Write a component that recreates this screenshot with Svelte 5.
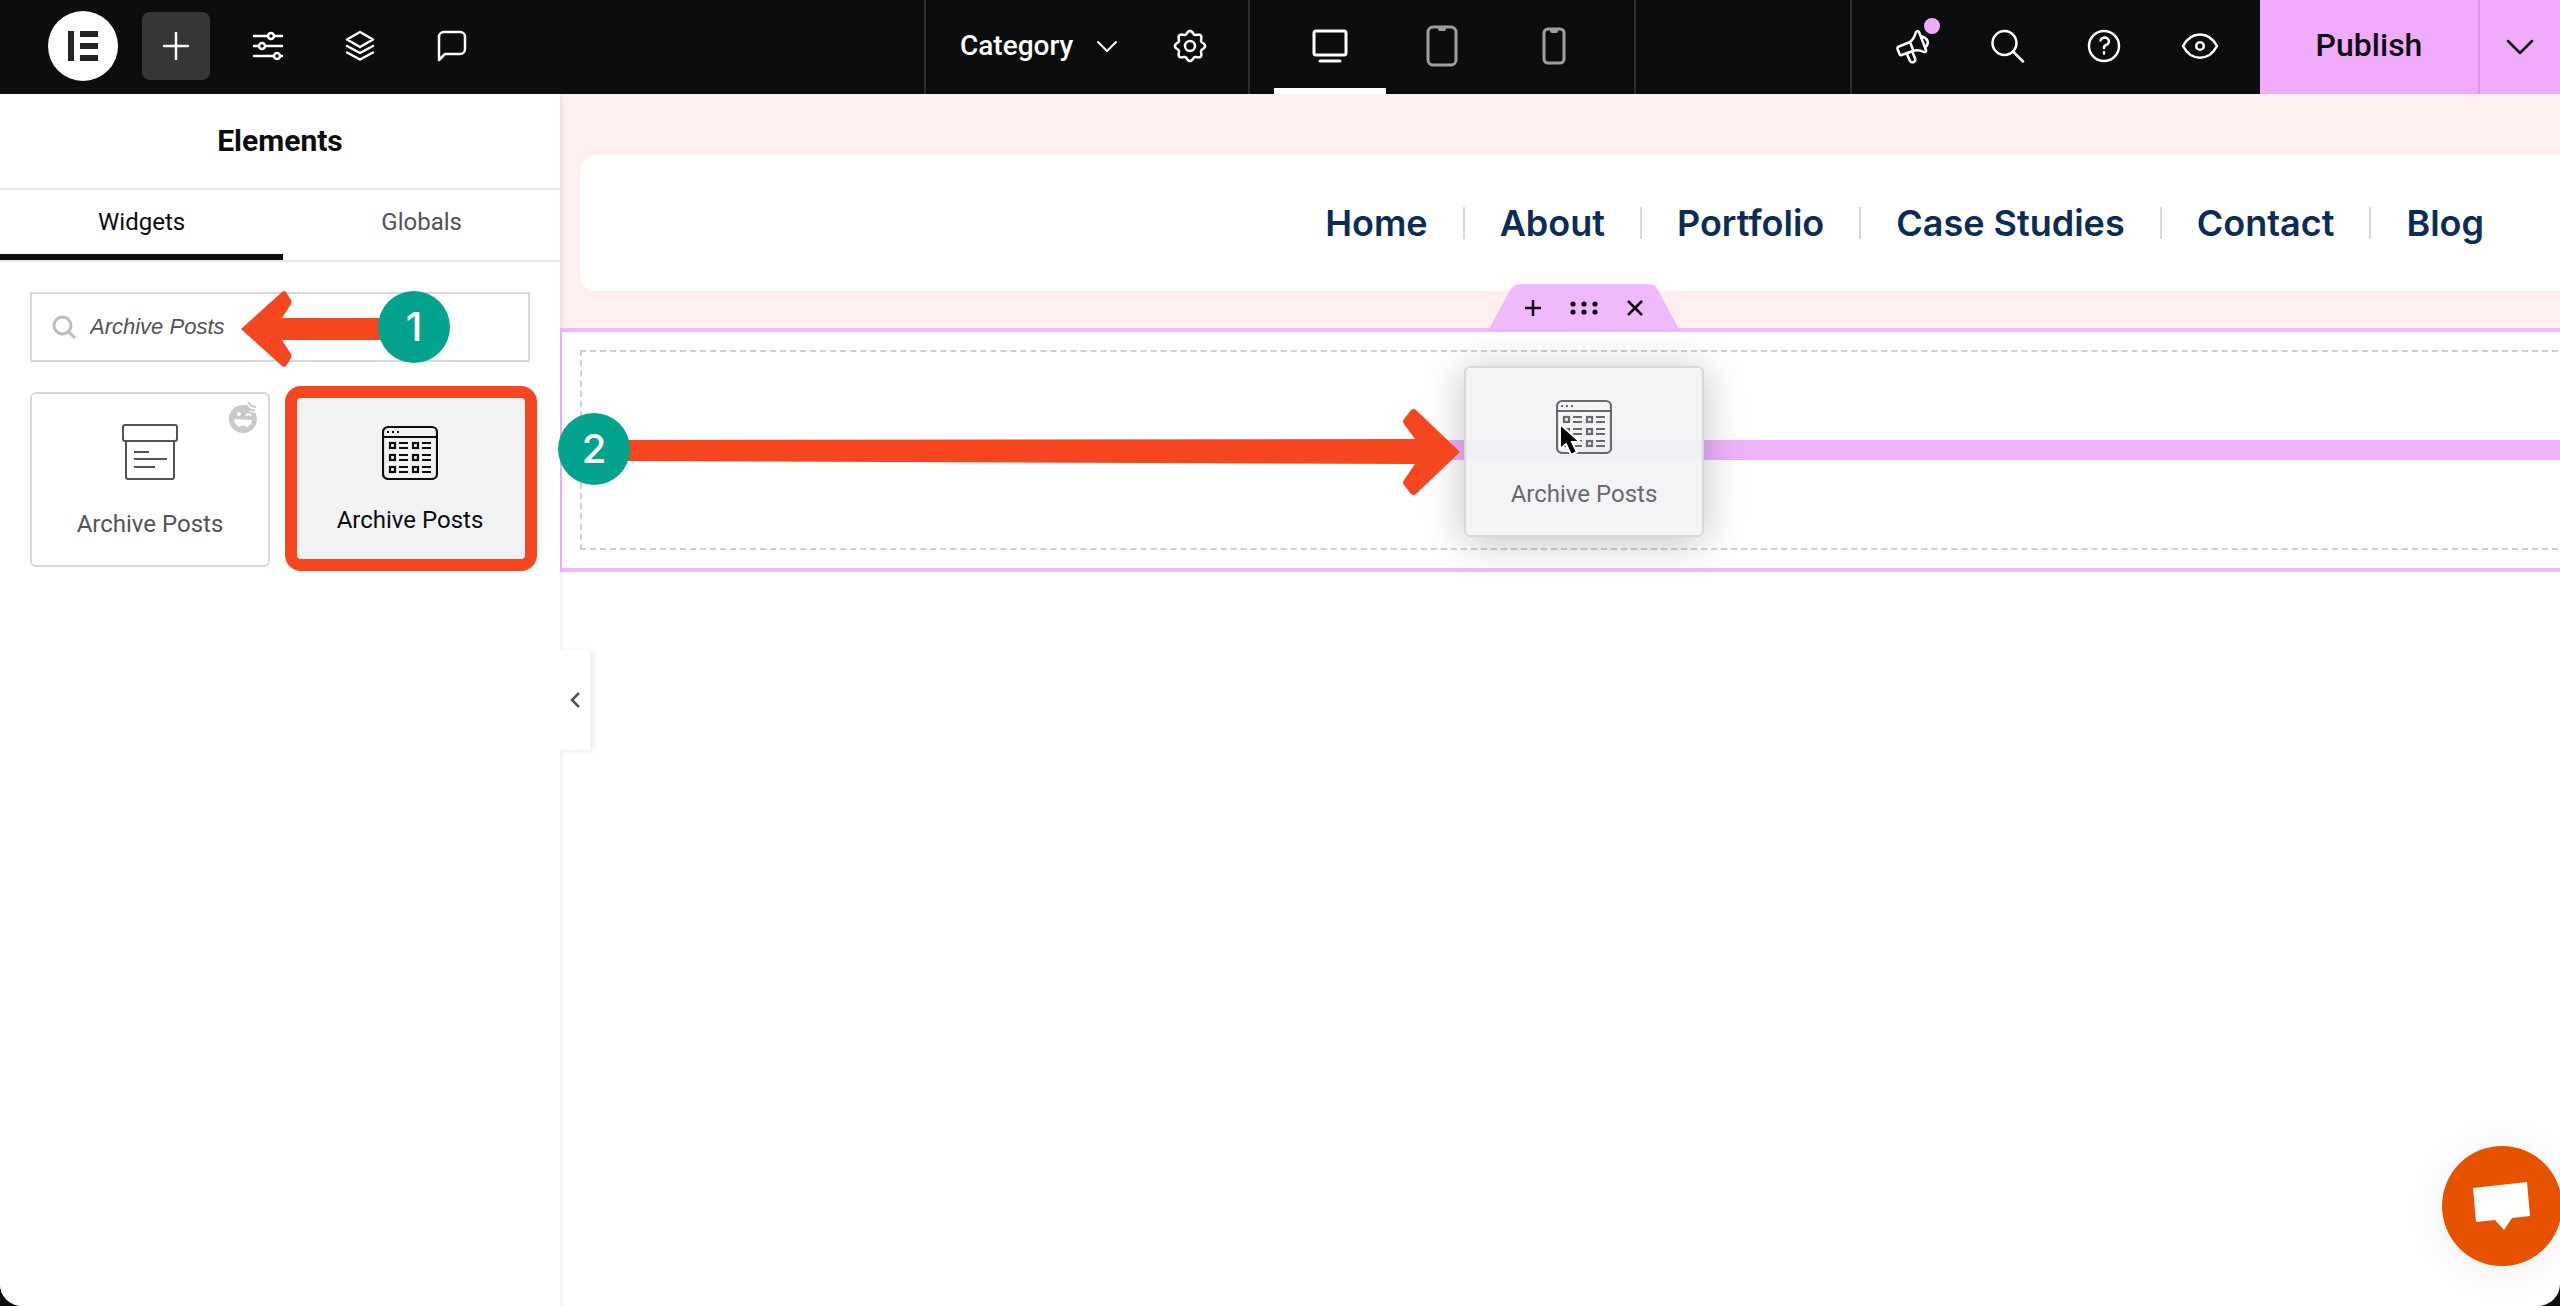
<script lang="ts">
	let query = $state('Archive Posts');
	let activeTab = $state('widgets');
	let device = $state('desktop');

	const navItems = ['Home', 'About', 'Portfolio', 'Case Studies', 'Contact', 'Blog'];

	// eight-toothed outline for the settings cog
	function cogPath(cx: number, cy: number, r: number, depth: number) {
		const pts: string[] = [];
		for (let i = 0; i < 160; i++) {
			const a = (i / 160) * Math.PI * 2;
			const d = r + depth * Math.cos(8 * a);
			pts.push(`${(cx + d * Math.cos(a)).toFixed(2)} ${(cy + d * Math.sin(a)).toFixed(2)}`);
		}
		return 'M' + pts.join('L') + 'Z';
	}
</script>

{#snippet postsIcon()}
	<svg class="widget-icon" width="56" height="56" viewBox="0 -2 56 56" fill="none" stroke="currentColor" stroke-width="2.2">
		<rect x="1" y="1" width="54" height="52" rx="5" />
		<path d="M1 11h54" />
		<path d="M5 6h2M10 6h2M15 6h2" />
		{#each [17, 29, 41] as y}
			{#each [8, 31] as x}
				<rect {x} {y} width="5" height="5" />
				<path d="M{x + 9} {y}h9M{x + 9} {y + 5}h9" />
			{/each}
		{/each}
	</svg>
{/snippet}

<div class="editor">
	<header class="topbar">
		<div class="bar-left">
			<a class="logo" href="#top" aria-label="Elementor">
				<svg width="30" height="30" viewBox="0 0 30 30" fill="#222426">
					<path d="M0 0h6v30H0zM12 0h18v6H12zM12 12h18v6H12zM12 24h18v6H12z" />
				</svg>
			</a>
			<button class="tool active" aria-label="Add element">
				<svg width="28" height="28" viewBox="0 0 28 28"><path d="M14 1v26M2 14h24" /></svg>
			</button>
			<button class="tool" aria-label="Site settings">
				<svg width="32" height="32" viewBox="0 0 32 32">
					<path d="M2 6h13M23 6h7M2 16h4M14 16h16M2 26h19M29 26h1" />
					<circle cx="19" cy="6" r="3" /><circle cx="10" cy="16" r="3" /><circle cx="25" cy="26" r="3" />
				</svg>
			</button>
			<button class="tool" aria-label="Structure">
				<svg width="32" height="32" viewBox="0 0 32 32">
					<path d="M16 2l13 7.500-13 7.500L3 9.500zM3 16l13 7 13-7M3 22.500l13 7 13-7" />
				</svg>
			</button>
			<button class="tool" aria-label="Notes">
				<svg width="32" height="32" viewBox="0 0 32 32">
					<path d="M3 30V7a5 5 0 0 1 5-5h16a5 5 0 0 1 5 5v12a5 5 0 0 1-5 5H9z" />
				</svg>
			</button>
		</div>

		<div class="bar-center">
			<div class="document">
				<button class="doc-name">
					Category
					<svg width="20" height="14" viewBox="0 0 20 14"><path d="M1 3l9 9 9-9" stroke-width="2" /></svg>
				</button>
				<button class="cog" aria-label="Page settings">
					<svg width="36" height="36" viewBox="0 0 36 36">
						<path d={cogPath(18, 18, 13.6, 1.5)} /><circle cx="18" cy="18" r="5" />
					</svg>
				</button>
			</div>
			<div class="devices">
				<button class:on={device === 'desktop'} onclick={() => (device = 'desktop')} aria-label="Desktop">
					<svg width="36" height="36" viewBox="0 0 36 36">
						<rect x="2" y="3" width="32" height="24" rx="2" /><path d="M8 33h20" />
					</svg>
				</button>
				<button class:on={device === 'tablet'} onclick={() => (device = 'tablet')} aria-label="Tablet">
					<svg width="32" height="42" viewBox="0 0 32 42">
						<rect x="2" y="2" width="28" height="38" rx="5" /><path d="M14 4h4" stroke-width="4" />
					</svg>
				</button>
				<button class:on={device === 'mobile'} onclick={() => (device = 'mobile')} aria-label="Mobile">
					<svg width="24" height="38" viewBox="0 0 24 38">
						<rect x="2" y="2" width="20" height="34" rx="4" /><path d="M10 4h4" stroke-width="4" />
					</svg>
				</button>
			</div>
		</div>

		<div class="bar-right">
			<div class="utilities">
				<button class="tool" aria-label="What's new">
					<svg width="34" height="36" viewBox="0 0 34 36">
						<path d="M4 18.500L15 14q4-3 6-10 1.500-2 3 0l7 18q.5 2-2 2-6-3-11-1L6.500 27q-1.500.5-2-1L2.500 21q-.5-2 1.500-2.500zM15 14l3.500 9M12 26l3 7q1.500 2 4 1 2-1.500 1-3.500L17.500 24M27 8.500q4.500 1.500 5.500 4.500t-1.500 5.500" />
					</svg>
					<span class="dot"></span>
				</button>
				<button class="tool" aria-label="Finder">
					<svg width="34" height="34" viewBox="0 0 34 34"><circle cx="13.500" cy="14" r="12" /><path d="M22 22.500L32 32.500" /></svg>
				</button>
				<button class="tool" aria-label="Help">
					<svg width="34" height="34" viewBox="0 0 34 34">
						<circle cx="17" cy="17" r="15" />
						<path d="M13.500 11.500a4.300 3.800 0 1 1 5.500 4.500c-1.500.6-2 1.300-2 3M17 23.200v1.200" />
					</svg>
				</button>
				<button class="tool" aria-label="Preview">
					<svg width="38" height="28" viewBox="0 0 38 28">
						<path d="M2 14C10-1.500 28-1.500 36 14 28 29.500 10 29.500 2 14z" /><circle cx="19" cy="14" r="3.800" />
					</svg>
				</button>
			</div>
			<button class="publish">Publish</button>
			<button class="publish-more" aria-label="Save options">
				<svg width="28" height="18" viewBox="0 0 28 18"><path d="M2 3l12 12L26 3" /></svg>
			</button>
		</div>
	</header>

	<div class="workspace">
		<aside class="panel">
			<h1>Elements</h1>
			<div class="tabs" role="tablist">
				<button role="tab" aria-selected={activeTab === 'widgets'} class:on={activeTab === 'widgets'} onclick={() => (activeTab = 'widgets')}>Widgets</button>
				<button role="tab" aria-selected={activeTab === 'globals'} class:on={activeTab === 'globals'} onclick={() => (activeTab = 'globals')}>Globals</button>
			</div>

			<div class="search">
				<svg width="24" height="24" viewBox="0 0 24 24" fill="none" stroke="#babcbf" stroke-width="3">
					<circle cx="10.500" cy="10.500" r="8.500" /><path d="M17 17l6 6" />
				</svg>
				<input type="text" bind:value={query} aria-label="Search widget" />
				<!-- step 1 -->
				<svg class="arrow-one" width="148" height="78" viewBox="0 0 148 78" fill="#f6461f">
					<path d="M1 39L42 2q2-2 4 0l5 8q1 2 0 4L42 28h106v22H42l9 14q1 2 0 4l-5 8q-2 2-4 0z" />
				</svg>
				<span class="step step-one">1</span>
			</div>

			<div class="widgets">
				<button class="card">
					<svg class="widget-icon" width="56" height="60" viewBox="0 0 56 60" fill="none" stroke="currentColor" stroke-width="2">
						<rect x="1" y="1" width="54" height="16" rx="2" />
						<path d="M4 17v36a2 2 0 0 0 2 2h44a2 2 0 0 0 2-2V17M12 28h15M12 35h33M12 43h21" />
					</svg>
					<span>Archive Posts</span>
					<svg class="brand" width="30" height="32" viewBox="0 0 30 32" fill="none">
						<circle cx="15" cy="17" r="14" fill="#c6c8ca" />
						<path d="M17 0h13v11l-8-1z" fill="#fff" />
						<path d="M18 3c2 4 5 6 9 5M20 0c2 3 4 5 8 5" stroke="#c6c8ca" stroke-width="2" />
						<circle cx="11" cy="12" r="2" fill="#fff" />
						<path d="M18 14c2-3 4-2 5 0" stroke="#fff" stroke-width="2" />
						<path d="M6 17l18 1c0 10-17 11-18-1z" fill="#fff" />
						<path d="M11 25q4-3 8 0-4 3-8 0z" fill="#c6c8ca" />
					</svg>
				</button>
				<button class="card picked">
					{@render postsIcon()}
					<span>Archive Posts</span>
				</button>
			</div>

			<button class="collapse" aria-label="Hide panel">
				<svg width="12" height="16" viewBox="0 0 12 16"><path d="M10 1L3 8l7 7" /></svg>
			</button>
		</aside>

		<main class="canvas">
			<div class="site-header">
				<nav>
					{#each navItems as item, i}
						{#if i > 0}<span class="divider"></span>{/if}
						<a href="#{item}">{item}</a>
					{/each}
				</nav>
			</div>

			<section class="section">
				<div class="section-handle">
					<svg class="handle-shape" width="190" height="48" viewBox="0 0 190 48" fill="#f0b9fb">
						<path d="M0 45L21 6q4-6 10-6h129q6 0 9 6l21 39v3H0z" />
					</svg>
					<button aria-label="Add section">
						<svg width="18" height="18" viewBox="0 0 18 18"><path d="M9 1v16M1 9h16" /></svg>
					</button>
					<button aria-label="Edit section">
						<svg class="grip" width="28" height="14" viewBox="0 0 28 14">
							{#each [3, 14, 25] as x}
								<circle cx={x} cy="3" r="2.600" /><circle cx={x} cy="11" r="2.600" />
							{/each}
						</svg>
					</button>
					<button aria-label="Delete section">
						<svg width="18" height="18" viewBox="0 0 18 18"><path d="M2 2l14 14M16 2L2 16" /></svg>
					</button>
				</div>
				<div class="column">
					<div class="drop-line"></div>
				</div>
				<div class="card dragged">
					{@render postsIcon()}
					<span>Archive Posts</span>
					<svg class="cursor" width="28" height="38" viewBox="0 0 28 38">
						<path d="M4 2v25l6-5 5 11 6-3-5-10h8z" fill="#000" stroke="#fff" stroke-width="2" />
					</svg>
				</div>
				<!-- step 2 -->
				<svg class="arrow-two" width="836" height="88" viewBox="0 0 836 88" fill="#f6461f">
					<path d="M0 32L791 31 780 16q-2-3 0-5l7-9q3-2 5 0l44 42-44 42q-2 2-5 0l-7-9q-2-2 0-5l11-16L0 53z" />
				</svg>
				<span class="step step-two">2</span>
			</section>
		</main>
	</div>

	<button class="chat" aria-label="Open chat">
		<svg width="58" height="50" viewBox="0 0 58 50" fill="#fff"><path d="M0 7L54 1l3 34-18 2-8 12-9-10-19 2z" /></svg>
	</button>
</div>

<style>
	:global(body) {
		margin: 0;
		background: #0c0d0e;
	}

	.editor {
		display: flex;
		flex-direction: column;
		min-height: 100vh;
		background: #fff;
		border-radius: 0 0 22px 22px;
		overflow: hidden;
		font-family: Roboto, "Liberation Sans", sans-serif;
	}

	button {
		font: inherit;
		color: inherit;
		background: none;
		border: 0;
		padding: 0;
		cursor: pointer;
	}

	a { text-decoration: none; }

	svg { flex: none; display: block; }

	/* top bar */
	.topbar {
		display: grid;
		grid-template-columns: 1fr auto 1fr;
		height: 94px;
		background: #0c0d0e;
		color: #fff;
	}

	.topbar button {
		display: flex;
		align-items: center;
		justify-content: center;
	}

	.topbar button svg {
		fill: none;
		stroke: currentColor;
		stroke-width: 2.5;
		stroke-linecap: round;
		stroke-linejoin: round;
	}

	.bar-left {
		display: flex;
		align-items: center;
		gap: 24px;
		padding: 0 48px 2px;
	}

	.logo {
		display: flex;
		align-items: center;
		justify-content: center;
		width: 70px;
		height: 70px;
		border-radius: 50%;
		background: #fff;
	}

	.tool {
		position: relative;
		width: 68px;
		height: 68px;
		border-radius: 8px;
	}

	.tool.active { background: #353638; }

	.bar-center {
		display: flex;
		border: solid #2c2d2f;
		border-width: 0 2px;
	}

	.document {
		display: flex;
		justify-content: space-between;
		align-items: center;
		width: 248px;
		padding: 0 40px 2px 34px;
		border-right: 2px solid #2c2d2f;
	}

	.doc-name {
		gap: 24px;
		font-size: 28px;
		font-weight: 500;
		line-height: 40px;
	}

	.devices {
		display: flex;
		padding: 0 24px;
	}

	.devices button {
		width: 112px;
		border: solid transparent;
		border-width: 6px 0;
		padding-bottom: 2px;
		color: #9da0a2;
	}

	.devices button svg { stroke-width: 3; }

	.devices button.on {
		border-bottom-color: #fff;
		color: #fff;
	}

	.bar-right {
		display: flex;
		justify-content: flex-end;
	}

	.utilities {
		display: flex;
		align-items: center;
		gap: 28px;
		padding: 0 26px 2px;
		border-left: 2px solid #2c2d2f;
	}

	.dot {
		position: absolute;
		top: 6px;
		right: 6px;
		width: 16px;
		height: 16px;
		border-radius: 50%;
		background: #f0abfc;
	}

	.topbar .publish {
		width: 218px;
		padding-bottom: 4px;
		background: #f0abfc;
		color: #0c0d0e;
		font-size: 32px;
		font-weight: 500;
	}

	.topbar .publish-more {
		width: 82px;
		border-left: 2px solid #eb8efb;
		background: #f0abfc;
		color: #0c0d0e;
	}

	/* panel */
	.workspace {
		display: flex;
		flex: 1;
		overflow: hidden;
	}

	.panel {
		position: relative;
		z-index: 1;
		flex: none;
		width: 560px;
		box-shadow: 0 0 6px rgba(0, 0, 0, 0.12);
		background: #fff;
	}

	h1 {
		margin: 0;
		padding: 27px 0;
		border-bottom: 2px solid #e6e7e8;
		font-size: 30px;
		font-weight: 700;
		line-height: 40px;
		text-align: center;
		color: #0c0d0e;
	}

	.tabs {
		display: flex;
		border-bottom: 2px solid #e6e7e8;
	}

	.tabs button {
		flex: 1 1 auto;
		height: 70px;
		border: solid transparent;
		border-width: 0 0 6px;
		font-size: 24px;
		line-height: 32px;
		color: #515457;
	}

	.tabs button.on {
		border-bottom-color: #0c0d0e;
		color: #0c0d0e;
	}

	.search {
		position: relative;
		display: flex;
		align-items: center;
		gap: 14px;
		margin: 30px;
		padding: 0 20px;
		border: 2px solid #d5d8dc;
	}

	.search input {
		flex: 1;
		min-width: 0;
		height: 66px;
		padding: 0;
		border: 0;
		outline: 0;
		font: italic 22px/32px "Liberation Sans", Arial, sans-serif;
		color: #515457;
	}

	.arrow-one {
		position: absolute;
		left: 208px;
		top: -4px;
	}

	.step {
		position: absolute;
		z-index: 5;
		width: 72px;
		height: 72px;
		border-radius: 50%;
		background: #04a38d;
		color: #fff;
		font-family: Inter, sans-serif;
		font-size: 40px;
		font-weight: 500;
		line-height: 72px;
		text-align: center;
	}

	.step-one {
		left: 346px;
		top: -3px;
	}

	.widgets {
		display: grid;
		grid-template-columns: 1fr 1fr;
		gap: 20px;
		padding: 0 30px;
	}

	.card {
		position: relative;
		display: flex;
		flex-direction: column;
		align-items: center;
		gap: 24px;
		padding: 30px 0 25px;
		border: 2px solid #d5d8dc;
		border-radius: 6px;
		font-size: 24px;
		line-height: 32px;
		color: #515457;
	}

	.brand {
		position: absolute;
		top: 8px;
		right: 10px;
	}

	.card.picked {
		background: #f1f2f3;
		color: #0c0d0e;
	}

	.card.picked::after {
		content: "";
		position: absolute;
		inset: -8px -9px -6px -7px;
		border: 12px solid #f6461f;
		border-radius: 16px;
	}

	.collapse {
		position: absolute;
		left: 100%;
		top: 556px;
		display: flex;
		align-items: center;
		justify-content: center;
		width: 30px;
		height: 100px;
		background: #fff;
		box-shadow: 4px 1px 6px rgba(0, 0, 0, 0.08);
	}

	.collapse svg {
		fill: none;
		stroke: #515457;
		stroke-width: 2.5;
	}

	/* canvas, a little wider than the visible area */
	.canvas {
		flex: none;
		width: calc(100% - 512px);
	}

	.site-header {
		padding: 61px 20px 37px;
		background: #fff0ef;
	}

	nav {
		display: flex;
		justify-content: flex-end;
		align-items: center;
		gap: 35px;
		height: 136px;
		padding-right: 104px;
		border-radius: 16px;
		background: #fff;
	}

	nav a {
		font: 600 36px/44px Inter, sans-serif;
		color: #0a2c57;
	}

	.divider {
		width: 2px;
		height: 32px;
		background: #d8d8d8;
	}

	.section {
		position: relative;
		padding: 18px;
		border: solid #f0b9fb;
		border-width: 4px 2px;
	}

	.section-handle {
		position: absolute;
		bottom: 100%;
		left: 50%;
		display: flex;
		align-items: center;
		justify-content: center;
		gap: 28px;
		width: 190px;
		height: 48px;
		margin-left: -95px;
	}

	.handle-shape {
		position: absolute;
		inset: 0;
	}

	.section-handle button { position: relative; }

	.section-handle button svg {
		fill: none;
		stroke: #0c0d0e;
		stroke-width: 2.5;
	}

	.section-handle button .grip {
		fill: #0c0d0e;
		stroke: none;
	}

	.column {
		display: flex;
		align-items: center;
		height: 196px;
		border: 2px dashed #d0d0d0;
	}

	.drop-line {
		flex: 1;
		height: 20px;
		margin: 0 -20px;
		background: #f0b3fb;
	}

	.dragged {
		position: absolute;
		top: 34px;
		left: 50%;
		width: 236px;
		margin-left: -120px;
		background: rgba(241, 243, 245, 0.93);
		box-shadow: 0 4px 40px rgba(0, 0, 0, 0.25);
		color: #676a6e;
	}

	.cursor {
		position: absolute;
		left: 90px;
		top: 54px;
	}

	.arrow-two {
		position: absolute;
		left: 62px;
		top: 76px;
	}

	.step-two {
		left: -4px;
		top: 81px;
	}

	.chat {
		position: fixed;
		right: -2px;
		bottom: 40px;
		display: flex;
		align-items: center;
		justify-content: center;
		width: 120px;
		height: 120px;
		border-radius: 50%;
		background: #e65200;
		box-shadow: 0 4px 40px rgba(0, 0, 0, 0.08);
	}
</style>
